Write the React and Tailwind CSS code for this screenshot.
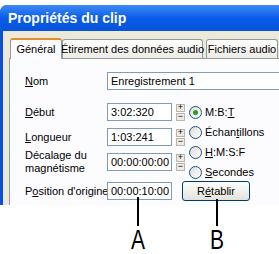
import React from "react";

const U = ({ children }) => <span className="underline underline-offset-[1px]">{children}</span>;

function Spinner() {
  return (
    <div className="ml-[4px] flex flex-col gap-[1px]">
      <div className="flex h-[8px] w-[9px] items-center justify-center border border-[#b9b5a8] bg-[#ecebe6] text-[9px] leading-none text-black">+</div>
      <div className="flex h-[8px] w-[9px] items-center justify-center border border-[#b9b5a8] bg-[#ecebe6] text-[9px] leading-none text-black">−</div>
    </div>
  );
}

function Radio({ checked, children }) {
  return (
    <div className="flex h-[20px] items-center gap-[3px] whitespace-nowrap">
      <div className="flex h-[13px] w-[13px] shrink-0 items-center justify-center rounded-full border border-[#1c5180] bg-gradient-to-br from-[#dcdcd7] to-white">
        {checked && <div className="h-[5px] w-[5px] rounded-full bg-[#21a121]" />}
      </div>
      <span>{children}</span>
    </div>
  );
}

function Field({ label, value, w = "w-[65px]", two }) {
  return (
    <div className="flex h-[18px] items-center">
      <div className={`w-[82px] shrink-0 whitespace-nowrap ${two ? "leading-[13px]" : ""}`}>{label}</div>
      <div className={`flex h-[18px] ${w} shrink-0 items-center whitespace-nowrap border border-[#7f9db9] bg-white pl-[3px]`}>{value}</div>
    </div>
  );
}

export default function App() {
  return (
    <div className="relative h-[254px] w-[279px] overflow-hidden bg-white text-[11px] text-black" style={{ fontFamily: '"Liberation Sans", Arial, sans-serif' }}>
      <div className="mt-[5px] h-[200px] w-[310px] overflow-hidden rounded-tl-[7px] bg-[#0a4fd6] pl-[3px]">
        <div className="-ml-[3px] flex h-[26px] items-center bg-gradient-to-b from-[#3d8af7] via-[#0a5ce8] to-[#0553db] pl-[8px] text-[14px] font-bold text-white">
          Propriétés du clip
        </div>
        <div className="h-full bg-[#ece9d8] pl-[6px] pt-[7px]">
          <div className="flex items-end whitespace-nowrap">
            <div className="relative z-10 -mb-[1px] ml-[1px] flex h-[21px] w-[52px] items-center justify-center rounded-t-[3px] border border-t-2 border-b-0 border-[#919b9c] border-t-[#e68b2c] bg-[#fcfcfe]">Général</div>
            <div className="flex h-[19px] w-[141px] items-center justify-center rounded-t-[3px] border border-b-0 border-[#919b9c] bg-gradient-to-b from-white to-[#ecebe5]">Étirement des données audio</div>
            <div className="ml-[3px] flex h-[19px] w-[72px] items-center justify-center rounded-t-[3px] border border-b-0 border-[#919b9c] bg-gradient-to-b from-white to-[#ecebe5]">Fichiers audio</div>
          </div>
          <div className="h-[200px] border border-[#919b9c] bg-[#fcfcfe] pl-[15px] pt-[13px]">
            <Field label={<><U>N</U>om</>} value="Enregistrement 1" w="w-[190px]" />
            <div className="mt-[13px] flex">
              <div className="flex flex-col gap-[7px]">
                <div className="flex items-center"><Field label={<><U>D</U>ébut</>} value="3:02:320" /><Spinner /></div>
                <div className="flex items-center"><Field label={<><U>L</U>ongueur</>} value="1:03:241" /><Spinner /></div>
                <div className="flex items-center"><Field two label={<>Décalage du<br />magnétisme</>} value="00:00:00:00" /><Spinner /></div>
              </div>
              <div className="ml-[4px] -mt-[1px] flex flex-col">
                <Radio checked>M:B:<U>T</U></Radio>
                <Radio>Échan<U>t</U>illons</Radio>
                <Radio><U>H</U>:M:S:F</Radio>
                <Radio><U>S</U>econdes</Radio>
              </div>
            </div>
            <div className="-mt-[1px] flex items-center">
              <Field label={<>P<U>o</U>sition d'origine</>} value="00:00:10:00" />
              <button className="ml-[10px] h-[20px] w-[68px] rounded-[3px] border border-[#003c74] bg-gradient-to-b from-white to-[#e3e2da] text-[11px]">R<U>é</U>tablir</button>
            </div>
          </div>
        </div>
      </div>
      <div className="absolute left-[137px] top-[197px] h-[29px] w-[2px] bg-black" />
      <div className="absolute left-[216px] top-[199px] h-[27px] w-[2px] bg-black" />
      <div className="absolute left-[124px] top-[226px] w-[28px] scale-x-[0.75] text-center text-[28px] leading-none">A</div>
      <div className="absolute left-[203px] top-[226px] w-[28px] scale-x-[0.75] text-center text-[28px] leading-none">B</div>
    </div>
  );
}
